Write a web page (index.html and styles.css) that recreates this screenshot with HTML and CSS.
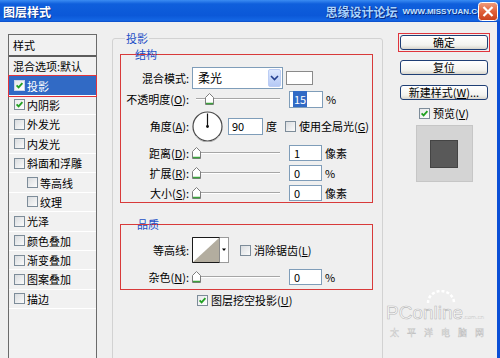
FILE: index.html
```html
<!DOCTYPE html>
<html lang="zh-CN">
<head>
    <meta charset="UTF-8">
    <title>图层样式</title>
    <link rel="stylesheet" href="styles.css">
</head>
<body>
    <div class="dialog">
        <div class="titlebar">
            <span class="title">图层样式</span>
            <span class="mark">思缘设计论坛</span>
            <span class="mark-url">WWW.MISSYUAN.COM</span>
            <svg class="close" width="20" height="19" viewBox="0 0 20 19">
                <defs>
                    <linearGradient id="cg" x1="0" y1="0" x2="0" y2="1">
                        <stop offset="0" stop-color="#f0a080"/>
                        <stop offset="0.5" stop-color="#e0603a"/>
                        <stop offset="1" stop-color="#c8401c"/>
                    </linearGradient>
                </defs>
                <rect x="0.5" y="0.5" width="19" height="18" rx="3" fill="url(#cg)" stroke="#fff"/>
                <path d="M5.5 5 L14.5 14 M14.5 5 L5.5 14" stroke="#fff" stroke-width="2.2"/>
            </svg>
        </div>

        <div class="content">
            <!-- 左侧样式列表 -->
            <div class="style-list">
                <div class="list-head">样式</div>
                <div class="list-item plain">混合选项:默认</div>
                <div class="list-item selected"><span class="cb on"></span>投影</div>
                <div class="list-item"><span class="cb on"></span>内阴影</div>
                <div class="list-item"><span class="cb"></span>外发光</div>
                <div class="list-item"><span class="cb"></span>内发光</div>
                <div class="list-item"><span class="cb"></span>斜面和浮雕</div>
                <div class="list-item sub"><span class="cb"></span>等高线</div>
                <div class="list-item sub"><span class="cb"></span>纹理</div>
                <div class="list-item"><span class="cb"></span>光泽</div>
                <div class="list-item"><span class="cb"></span>颜色叠加</div>
                <div class="list-item"><span class="cb"></span>渐变叠加</div>
                <div class="list-item"><span class="cb"></span>图案叠加</div>
                <div class="list-item"><span class="cb"></span>描边</div>
            </div>

            <!-- 中间 投影 设置 -->
            <div class="group">
                <span class="legend group-legend">投影</span>

                <div class="box structure">
                    <span class="legend box-legend">结构</span>
                    <div class="row r1">
                        <span class="label">混合模式:</span>
                        <div class="ctrl">
                            <div class="select">
                                <span class="select-text">柔光</span>
                                <span class="drop">
                                    <svg width="9" height="6" viewBox="0 0 9 6"><path d="M1 1 L4.5 4.5 L8 1" stroke="#24408f" stroke-width="1.6" fill="none"/></svg>
                                </span>
                            </div>
                            <span class="swatch"></span>
                        </div>
                    </div>
                    <div class="row r2">
                        <span class="label">不透明度(<u>O</u>):</span>
                        <div class="ctrl">
                            <div class="slider"><svg class="thumb" style="left:13px" width="9" height="12" viewBox="0 0 9 12"><path d="M0.5 4.5 L4.5 0.5 L8.5 4.5 V11.5 H0.5 Z" fill="#fff" stroke="#7d7d7d"/><path d="M1 10.5 H8" stroke="#3da23d" stroke-width="1.5"/></svg></div>
                            <span class="field"><span class="sel">15</span></span>
                            <span class="unit">%</span>
                        </div>
                    </div>
                    <div class="row r3">
                        <span class="label">角度(<u>A</u>):</span>
                        <div class="ctrl">
                            <svg class="dial" width="31" height="31" viewBox="0 0 31 31">
                                <circle cx="15.5" cy="15.5" r="14.5" fill="#fff" stroke="#4a4a4a" stroke-width="1.2"/>
                                <path d="M4 25 A14 14 0 0 0 27 25" stroke="#b0b0b0" stroke-width="1" fill="none"/>
                                <line x1="15.5" y1="15.5" x2="15.5" y2="2.5" stroke="#111" stroke-width="1.2"/>
                                <circle cx="15.5" cy="15.5" r="1.4" fill="#111"/>
                            </svg>
                            <span class="field angle">90</span>
                            <span class="unit deg">度</span>
                            <span class="cb global"></span>
                            <span class="cb-text">使用全局光(<u>G</u>)</span>
                        </div>
                    </div>
                    <div class="row r4">
                        <span class="label">距离(<u>D</u>):</span>
                        <div class="ctrl">
                            <div class="slider"><svg class="thumb" style="left:0px" width="9" height="12" viewBox="0 0 9 12"><path d="M0.5 4.5 L4.5 0.5 L8.5 4.5 V11.5 H0.5 Z" fill="#fff" stroke="#7d7d7d"/><path d="M1 10.5 H8" stroke="#3da23d" stroke-width="1.5"/></svg></div>
                            <span class="field small">1</span>
                            <span class="unit">像素</span>
                        </div>
                    </div>
                    <div class="row r5">
                        <span class="label">扩展(<u>R</u>):</span>
                        <div class="ctrl">
                            <div class="slider"><svg class="thumb" style="left:0px" width="9" height="12" viewBox="0 0 9 12"><path d="M0.5 4.5 L4.5 0.5 L8.5 4.5 V11.5 H0.5 Z" fill="#fff" stroke="#7d7d7d"/><path d="M1 10.5 H8" stroke="#3da23d" stroke-width="1.5"/></svg></div>
                            <span class="field small">0</span>
                            <span class="unit">%</span>
                        </div>
                    </div>
                    <div class="row r6">
                        <span class="label">大小(<u>S</u>):</span>
                        <div class="ctrl">
                            <div class="slider"><svg class="thumb" style="left:0px" width="9" height="12" viewBox="0 0 9 12"><path d="M0.5 4.5 L4.5 0.5 L8.5 4.5 V11.5 H0.5 Z" fill="#fff" stroke="#7d7d7d"/><path d="M1 10.5 H8" stroke="#3da23d" stroke-width="1.5"/></svg></div>
                            <span class="field small">0</span>
                            <span class="unit">像素</span>
                        </div>
                    </div>
                </div>

                <div class="box quality">
                    <span class="legend box-legend q">品质</span>
                    <div class="row q1">
                        <span class="label">等高线:</span>
                        <div class="ctrl">
                            <svg class="contour" width="37" height="26" viewBox="0 0 37 26">
                                <rect x="0.5" y="0.5" width="36" height="25" fill="#fff" stroke="#9a9a9a"/>
                                <polygon points="1,25 27,1 27,25" fill="#b3ad9f"/>
                                <path d="M0.5 25.5 V0.5 H27.5 M0.5 25.5 H27.5" stroke="#1a1a1a" fill="none"/>
                                <line x1="27.5" y1="1" x2="27.5" y2="25" stroke="#8a8a8a"/>
                                <polygon points="30,11.5 34,11.5 32,14" fill="#000"/>
                            </svg>
                            <span class="cb anti"></span>
                            <span class="cb-text">消除锯齿(<u>L</u>)</span>
                        </div>
                    </div>
                    <div class="row q2">
                        <span class="label">杂色(<u>N</u>):</span>
                        <div class="ctrl">
                            <div class="slider"><svg class="thumb" style="left:0px" width="9" height="12" viewBox="0 0 9 12"><path d="M0.5 4.5 L4.5 0.5 L8.5 4.5 V11.5 H0.5 Z" fill="#fff" stroke="#7d7d7d"/><path d="M1 10.5 H8" stroke="#3da23d" stroke-width="1.5"/></svg></div>
                            <span class="field small">0</span>
                            <span class="unit">%</span>
                        </div>
                    </div>
                </div>

                <div class="knockout">
                    <span class="cb on"></span>
                    <span class="cb-text">图层挖空投影(<u>U</u>)</span>
                </div>
            </div>

            <!-- 右侧按钮 -->
            <div class="side">
                <div class="hl"><div class="btn">确定</div></div>
                <div class="btn reset">复位</div>
                <div class="btn new">新建样式(<u>W</u>)...</div>
                <div class="preview-check">
                    <span class="cb on"></span>
                    <span class="cb-text">预览(<u>V</u>)</span>
                </div>
                <div class="preview"><div class="preview-square"></div></div>
            </div>
        </div>

        <div class="pcol">
            <svg class="pcol-arc" width="30" height="14" viewBox="0 0 30 14">
                <path d="M2 13 A13 12 0 0 1 28 13" stroke="#fff" stroke-width="2.5" fill="none" stroke-dasharray="3 2"/>
            </svg>
            <div class="pcol-name">PConline<span class="pcol-dom">.com.cn</span></div>
            <div class="pcol-cn">太平洋电脑网</div>
        </div>
    </div>
</body>
</html>
```

FILE: styles.css
```css
body {
    margin: 0;
    font-family: "Noto Sans CJK SC", "Liberation Sans", sans-serif;
    font-size: 11px;
    color: #000;
    background: #efefef;
}
.dialog {
    position: relative;
    width: 500px;
    height: 358px;
    overflow: hidden;
    background: #efefef;
}
.titlebar {
    height: 22px;
    display: flex;
    align-items: center;
    background: linear-gradient(#3b8cf2, #0f5fdc 18%, #0b58d8 70%, #1466e4 92%, #0a4cc6);
    color: #fff;
}
.title {
    margin-left: 3px;
    font-size: 12px;
    font-weight: bold;
    text-shadow: 1px 1px 0 #0a3a9a;
}
.mark {
    margin-left: auto;
    font-size: 12px;
    font-weight: bold;
    color: #a8d4ff;
    text-shadow: 0 0 1px #0a2a80, 1px 1px 0 #0a2a80;
}
.mark-url {
    margin-left: 5px;
    font-family: "Liberation Sans", sans-serif;
    font-size: 8px;
    font-weight: bold;
    color: #c4e2ff;
    text-shadow: 1px 1px 0 #0a2a80;
}
.close {
    margin-left: -12px;
    margin-right: 2px;
}
.content {
    display: flex;
    align-items: flex-start;
    width: 500px;
    height: 336px;
    box-sizing: border-box;
    border-right: 3px solid #0b4fd6;
}

/* 样式列表 */
.style-list {
    margin: 12px 0 0 8px;
    width: 89px;
    height: 340px;
    box-sizing: border-box;
    border: 1px solid #6b6b6b;
    background: #f1f1f1;
}
.list-head {
    height: 20px;
    line-height: 20px;
    padding-left: 4px;
    border-bottom: 2px solid #5c5c5c;
}
.list-item {
    display: flex;
    align-items: center;
    height: 18.4px;
    padding-left: 5px;
    border-bottom: 1px solid #fff;
}
.list-item.plain {
    padding-left: 4px;
}
.list-item.sub {
    padding-left: 18px;
}
.list-item .cb {
    margin-right: 2px;
}
.list-item.selected {
    background: #316ac5;
    color: #fff;
    outline: 1px solid #e0343c;
}
.list-item.selected .cb {
    border-color: #c8d4e8;
}

/* 复选框 */
.cb {
    display: inline-block;
    flex: none;
    width: 11px;
    height: 11px;
    box-sizing: border-box;
    border: 1px solid #7d8c99;
    background: linear-gradient(135deg, #d9dcdf, #fbfbfb);
}
.cb.on {
    background: url("data:image/svg+xml,%3Csvg xmlns='http://www.w3.org/2000/svg' viewBox='0 0 9 9'%3E%3Cpath d='M1.6 4.4 L3.6 6.4 L7.4 2.2' stroke='%2321a121' stroke-width='1.8' fill='none'/%3E%3C/svg%3E") center / 9px 9px no-repeat, linear-gradient(135deg, #e6e8ea, #fff);
}
.cb-text {
    margin-left: 3px;
}

/* 分组 */
.group {
    position: relative;
    margin: 16px 0 0 15px;
    width: 271px;
    height: 330px;
    box-sizing: border-box;
    border: 1px solid #d2d2d2;
    border-radius: 3px;
    padding: 15px 9px 0 7px;
}
.legend {
    position: absolute;
    color: #1d50c6;
    line-height: 14px;
}
.group-legend {
    left: 12px;
    top: -8px;
    padding: 0 1px;
    background: #efefef;
}
.box {
    position: relative;
    border: 1px solid #d83a3a;
}
.box-legend {
    left: 14px;
    top: -8px;
}
.box-legend.q {
    left: 16px;
}
.structure {
    padding-top: 12px;
}
.quality {
    margin-top: 21px;
    padding: 11px 0 0;
}
.row {
    display: grid;
    grid-template-columns: 68px auto;
    column-gap: 3px;
    align-items: center;
}
.label {
    text-align: right;
    white-space: nowrap;
}
.ctrl {
    display: flex;
    align-items: center;
}
.r1 { height: 22px; }
.r2 { height: 20px; }
.r3 { height: 34px; }
.r4 { height: 20px; }
.r5 { height: 20px; }
.r6 { height: 19px; }
.q1 { height: 28px; }
.q2 { height: 25px; }

.select {
    display: flex;
    width: 91px;
    height: 22px;
    box-sizing: border-box;
    border: 1px solid #7f9db9;
    background: #fff;
}
.select-text {
    padding-left: 5px;
    line-height: 20px;
    font-size: 12px;
}
.drop {
    display: flex;
    align-items: center;
    justify-content: center;
    margin: 1px 1px 1px auto;
    width: 13px;
    box-sizing: border-box;
    border: 1px solid #bccdf4;
    border-radius: 2px;
    background: linear-gradient(#dde8fe, #b5c9f6);
}
.swatch {
    margin-left: 3px;
    width: 27px;
    height: 14px;
    box-sizing: border-box;
    border: 1px solid #8a8a8a;
    background: #fff;
}
.slider {
    position: relative;
    width: 90px;
    height: 14px;
}
.slider::before {
    content: "";
    position: absolute;
    left: 4px;
    right: 2px;
    top: 6px;
    height: 1px;
    background: #a6a6a6;
    border-bottom: 1px solid #fff;
}
.thumb {
    position: absolute;
    top: 1px;
}
.field {
    margin-left: 7px;
    width: 34px;
    height: 17px;
    box-sizing: border-box;
    border: 1px solid #7f9db9;
    background: #fff;
    padding-left: 3px;
    line-height: 15px;
}
.field.small {
    width: 33px;
    height: 16px;
    line-height: 14px;
    padding-left: 4px;
}
.field.angle {
    margin-left: 5px;
    width: 35px;
}
.sel {
    background: #316ac5;
    color: #fff;
    padding: 0 1px;
}
.unit {
    margin-left: 3px;
}
.unit.deg {
    margin-left: 3px;
}
.dial {
    margin-left: 0;
}
.cb.global {
    margin-left: 8px;
}
.cb.anti {
    margin-left: 11px;
}
.knockout {
    display: flex;
    align-items: center;
    height: 16px;
    margin-top: 2px;
    padding-left: 77px;
}

/* 右侧 */
.side {
    margin: 11px 0 0 15px;
    width: 92px;
    display: flex;
    flex-direction: column;
    align-items: center;
}
.hl {
    border: 1px solid #e0343c;
    padding: 1px;
}
.btn {
    width: 88px;
    height: 15px;
    box-sizing: border-box;
    border: 1px solid #1f3f75;
    border-radius: 3px;
    background: linear-gradient(#ffffff, #f3f3ef 70%, #d8d5cc);
    text-align: center;
    line-height: 13px;
}
.btn.reset {
    margin-top: 8px;
}
.btn.new {
    margin-top: 10px;
}
.preview-check {
    display: flex;
    align-items: center;
    height: 14px;
    margin-top: 6px;
}
.preview {
    display: flex;
    align-items: center;
    justify-content: center;
    margin-top: 5px;
    width: 57px;
    height: 57px;
    box-sizing: border-box;
    border: 1px solid #c6c6c6;
    background: #d4d4d4;
}
.preview-square {
    width: 28px;
    height: 28px;
    box-sizing: border-box;
    border: 1px solid #444;
    background: #595959;
}

/* 水印 */
.pcol {
    position: absolute;
    left: 386px;
    top: 290px;
    width: 106px;
    color: rgba(255, 255, 255, 0.92);
}
.pcol-arc {
    display: block;
    margin-left: 40px;
}
.pcol-name {
    font-family: "Liberation Sans", sans-serif;
    font-size: 19px;
    line-height: 18px;
    -webkit-text-stroke: 0.6px #b9b9b9;
}
.pcol-dom {
    font-size: 6px;
    -webkit-text-stroke: 0.2px #b9b9b9;
}
.pcol-cn {
    margin-top: 2px;
    margin-left: 4px;
    font-size: 9px;
    letter-spacing: 8px;
    line-height: 10px;
    -webkit-text-stroke: 0.4px #b9b9b9;
}
```
